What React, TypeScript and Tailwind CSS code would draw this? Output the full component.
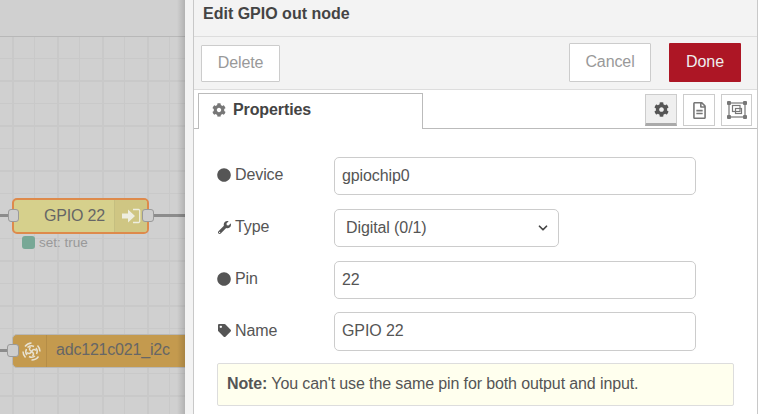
import { FaCircle, FaCog, FaRegFileAlt, FaTag, FaWrench } from "react-icons/fa";
import { ChevronDown } from "lucide-react";
import type { ReactNode } from "react";

const FONT = "font-['Liberation_Sans',Arial,sans-serif]";

function Field({ icon, label, children, className }: { icon: ReactNode; label: string; children: ReactNode; className: string }) {
  return (
    <div className={`flex items-center ${className}`}>
      <label className="flex w-[117px] -translate-y-px items-center gap-[4px] text-[16px] tracking-[-0.1px] text-[#555]">
        <span className="flex w-[14px] justify-center">{icon}</span>
        {label}
      </label>
      {children}
    </div>
  );
}

function TextBox({ value, height = "h-[38px]" }: { value: string; height?: string }) {
  return (
    <div className={`flex w-[362px] items-center rounded-[5px] border border-[#ccc] bg-white pb-px pl-[7px] text-[16px] tracking-[-0.1px] text-[#555] ${height}`}>
      {value}
    </div>
  );
}

function Canvas() {
  return (
    <div className="relative h-full w-[185px] shrink-0 overflow-hidden bg-[#d0d0d0]">
      <div className="absolute inset-x-0 top-[36px] bottom-0 border-t border-[#b8b8b8] bg-[linear-gradient(to_right,#c9c9c9_2px,transparent_2px,transparent_22px,#c9c9c9_22px,#c9c9c9_23px,transparent_23px),linear-gradient(to_bottom,transparent_21px,#c9c9c9_21px,#c9c9c9_22px,transparent_22px,transparent_43px,#c9c9c9_43px,#c9c9c9_45px)] bg-[size:45px_45px] bg-[position:12px_0]" />

      {/* wires */}
      <div className="absolute left-0 top-[214px] h-[3px] w-[12px] bg-[#8c8c8c]" />
      <div className="absolute left-[150px] top-[214px] h-[3px] w-[35px] bg-[#8c8c8c]" />
      <div className="absolute left-0 top-[349px] h-[3px] w-[12px] bg-[#8c8c8c]" />

      {/* GPIO 22 node */}
      <div className="absolute left-[12px] top-[198px] flex h-[36px] w-[137px] overflow-hidden rounded-[5px] border-2 border-[#de8a4b] bg-[#d6d08c]">
        <div className="flex flex-1 items-center justify-center pb-px pl-[21px] text-[16px] tracking-[-0.2px] text-[#666]">GPIO 22</div>
        <div className="flex w-[33px] items-center justify-center border-l border-[#c5bf80] bg-[#cfc683]">
          <svg width="20" height="16" viewBox="0 0 20 16" fill="none">
            <path d="M1 5.500h6V1.500L14 8l-7 6.500v-4H1z" fill="#eeeee0" />
            <path d="M12 1.500h5.500a1.200 1.200 0 0 1 1.200 1.200v10.600a1.200 1.200 0 0 1-1.200 1.200H12" stroke="#eeeee0" strokeWidth="1.3" />
          </svg>
        </div>
      </div>
      <div className="absolute left-[8px] top-[209px] h-[13px] w-[11px] rounded-[3px] border border-[#9a9a9a] bg-[#cdcdcd]" />
      <div className="absolute left-[142px] top-[209px] h-[13px] w-[12px] rounded-[3px] border border-[#9a9a9a] bg-[#cdcdcd]" />
      <div className="absolute left-[22px] top-[236px] h-[13px] w-[13px] rounded-[3px] bg-[#77a896]" />
      <div className="absolute left-[39px] top-[235px] text-[13.5px] leading-[15px] text-[#999]">set: true</div>

      {/* adc121c021_i2c node */}
      <div className="absolute left-[12px] top-[334px] flex h-[34px] w-[180px] rounded-[5px] border border-[#b8b8b8] bg-[#c49a4e]">
        <div className="flex w-[34px] items-center justify-center border-r border-[#b58d47] pl-[4px] text-[#e8e2d2]">
          <svg width="21" height="21" viewBox="0 0 21 21" fill="none" stroke="currentColor" strokeWidth="1.5">
            <path d="M4 5.500A8.500 8.500 0 0 1 10.500 2M16.500 4.500A8.500 8.500 0 0 1 19 10.500M17.500 15.500A8.500 8.500 0 0 1 10.500 19M4.500 16.500A8.500 8.500 0 0 1 2 10.500" />
            <path d="M6.500 6.500A5.500 5.500 0 0 1 13 5.500M15 7A5.500 5.500 0 0 1 15.500 13M14 15A5.500 5.500 0 0 1 8 15.500M6 14A5.500 5.500 0 0 1 5.500 8" />
            <path d="M10.500 10.500C8 9 8 7.500 9.500 6M10.500 10.500C12 8 13.500 8 15 9.500M10.500 10.500C13 12 13 13.500 11.500 15M10.500 10.500C9 13 7.500 13 6 11.500" />
          </svg>
        </div>
        <div className="pl-[9px] text-[16px] leading-[30px] tracking-[-0.2px] text-[#666]">adc121c021_i2c</div>
      </div>
      <div className="absolute left-[7px] top-[344px] h-[13px] w-[12px] rounded-[3px] border border-[#9a9a9a] bg-[#cdcdcd]" />

      {/* tray shadow */}
      <div className="absolute inset-y-0 right-0 w-[8px] bg-gradient-to-r from-transparent to-[#00000026]" />
    </div>
  );
}

export default function App() {
  return (
    <div className={`flex h-[414px] w-[761px] overflow-hidden bg-white ${FONT}`}>
      <Canvas />
      <div className="w-[8px] shrink-0 bg-[#f3f3f3]" />
      <div className="mr-[3px] flex min-w-0 flex-1 flex-col border-x border-[#c8c8c8] bg-white">
        <div className="flex h-[37px] shrink-0 items-start border-b border-[#ddd] bg-[#f3f3f3] pl-[9px] pt-[6px] text-[16px] font-bold leading-[16px] text-[#444]">
          Edit GPIO out node
        </div>
        <div className="flex h-[53px] shrink-0 items-start border-b border-[#ddd] bg-[#f3f3f3] pl-[7px] pt-[6px]">
          <button className="mt-[2px] h-[37px] w-[79px] rounded-[1px] border border-[#ccc] bg-white pb-[2px] text-[16px] tracking-[-0.1px] text-[#999]">Delete</button>
          <button className="ml-[289px] h-[39px] w-[82px] rounded-[1px] border border-[#ccc] bg-white pb-[2px] text-[16px] tracking-[-0.1px] text-[#999]">Cancel</button>
          <button className="ml-[18px] h-[39px] w-[72px] rounded-[1px] bg-[#ad1625] pb-[2px] text-[16px] text-[#eee]">Done</button>
        </div>
        <div className="relative flex h-[39px] shrink-0 items-end border-b border-[#bbb] pl-[4px]">
          <div className="relative top-[1px] flex h-[36px] w-[225px] items-center gap-[7px] border border-b-0 border-[#bbb] bg-white pb-[4px] pl-[13px] text-[16px] font-bold tracking-[-0.1px] text-[#444]">
            <FaCog className="text-[#777]" size={14} />
            Properties
          </div>
          <div className="ml-auto mr-[5px] flex gap-[6px] self-start pt-[4px]">
            <div className="flex h-[32px] w-[32px] items-center justify-center border border-[#ccc] border-b-[3px] border-b-[#aaa] bg-[#efefef] text-[#555]">
              <FaCog size={15} />
            </div>
            <div className="flex h-[32px] w-[32px] items-center justify-center border border-[#ccc] bg-white text-[#777]">
              <FaRegFileAlt size={17} />
            </div>
            <div className="flex h-[32px] w-[31px] items-center justify-center border border-[#ccc] bg-white text-[#777]">
              <svg width="20" height="18" viewBox="0 0 20 18" fill="none" stroke="currentColor" strokeWidth="1.2">
                <rect x="2" y="2" width="16" height="14" />
                <rect x="5.500" y="4.500" width="7.500" height="6" />
                <rect x="8.500" y="7.500" width="6" height="5" />
                <g fill="currentColor" stroke="none">
                  <rect x="0" y="0" width="4" height="4" rx="1" />
                  <rect x="16" y="0" width="4" height="4" rx="1" />
                  <rect x="0" y="14" width="4" height="4" rx="1" />
                  <rect x="16" y="14" width="4" height="4" rx="1" />
                </g>
              </svg>
            </div>
          </div>
        </div>
        <div className="flex flex-col pl-[23px] pt-[28px]">
          <Field className="mb-[14px]" icon={<FaCircle size={14} className="text-[#555]" />} label="Device">
            <TextBox value="gpiochip0" />
          </Field>
          <Field className="mb-[14px]" icon={<FaWrench size={13} className="text-[#555]" />} label="Type">
            <div className="flex h-[38px] w-[225px] items-center justify-between rounded-[5px] border border-[#ccc] bg-white pb-px pl-[11px] pr-[8px] text-[16px] tracking-[-0.1px] text-[#555]">
              Digital (0/1)
              <ChevronDown size={14} strokeWidth={3} className="text-[#444]" />
            </div>
          </Field>
          <Field className="mb-[13px]" icon={<FaCircle size={14} className="text-[#555]" />} label="Pin">
            <TextBox value="22" />
          </Field>
          <Field className="mb-[12px]" icon={<FaTag size={13} className="text-[#555]" />} label="Name">
            <TextBox value="GPIO 22" height="h-[39px]" />
          </Field>
          <div className="h-[43px] w-[517px] rounded-[2px] border border-[#ddd] bg-[#ffffee] pl-[9px] text-[16px] leading-[40px] tracking-[-0.12px] text-[#555]">
            <b>Note:</b> You can't use the same pin for both output and input.
          </div>
        </div>
      </div>
    </div>
  );
}
